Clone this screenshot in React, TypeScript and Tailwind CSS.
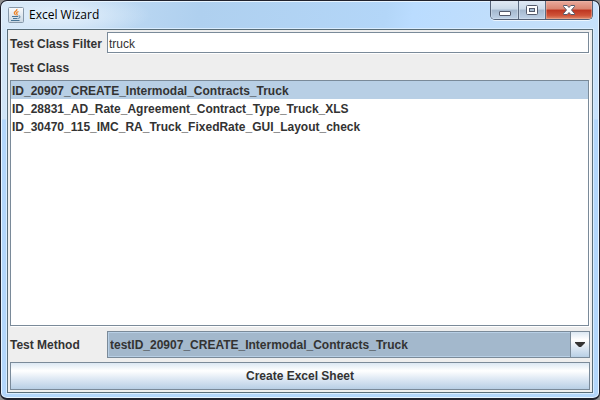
import { useState } from "react";

const classes = [
  "ID_20907_CREATE_Intermodal_Contracts_Truck",
  "ID_28831_AD_Rate_Agreement_Contract_Type_Truck_XLS",
  "ID_30470_115_IMC_RA_Truck_FixedRate_GUI_Layout_check",
];

function JavaIcon() {
  return (
    <svg className="size-4 shrink-0" viewBox="0 0 16 16" aria-hidden="true">
      <defs>
        <linearGradient id="tile" x1="0" y1="0" x2="0" y2="1">
          <stop offset="0" stopColor="#fbfcfd" />
          <stop offset="1" stopColor="#c9d7e3" />
        </linearGradient>
      </defs>
      <rect x=".5" y=".5" width="15" height="15" rx="1" fill="url(#tile)" stroke="#8799aa" />
      <path d="M8.800 2c1 2-3 2.600-2.500 4.200.2.800 1.200 1 1 2M10.500 4.500c-2 .8-2.500 1.700-1.500 2.500.4.5.2 1-.4 1.500" fill="none" stroke="#ec8428" strokeWidth="1.300" />
      <path d="M4 9.500h6M5 11.500h4.500M10.500 9c2.300-.4 2 2-.2 2.400M3 13.500h8.500" fill="none" stroke="#487596" strokeWidth="1" />
    </svg>
  );
}

function TitleBar() {
  const plain =
    "flex items-center justify-center border-r border-[#5c6b80] bg-[linear-gradient(#e1eaf4,#cbdae9_45%,#a4b8ce_50%,#bed1e6)] shadow-[inset_0_0_0_1px_#dbe6f280]";
  return (
    <header className="flex h-7 shrink-0 items-start justify-between">
      <div className="flex items-center gap-[5px] pt-[6px] pl-px">
        <JavaIcon />
        <h1 className="font-['Open_Sans',sans-serif] text-xs leading-4 font-normal text-black">Excel Wizard</h1>
      </div>
      <div className="flex h-[19px] overflow-hidden rounded-b-[5px] border border-t-0 border-[#536176] shadow-[0_1px_0_#ffffffb0]">
        <button type="button" aria-label="Minimize" className={`w-7 ${plain}`}>
          <svg className="mt-1.5 h-[5px] w-3" viewBox="0 0 12 5">
            <rect x=".5" y=".5" width="11" height="4" rx=".5" fill="#fff" stroke="#535a6b" />
          </svg>
        </button>
        <button type="button" aria-label="Maximize" className={`w-[27px] ${plain}`}>
          <svg className="h-2.5 w-3" viewBox="0 0 12 10">
            <rect x=".5" y=".5" width="11" height="9" rx="1" fill="#fff" stroke="#535a6b" />
            <rect x="3.500" y="3.500" width="5" height="3" fill="#a9bed3" stroke="#535a6b" />
          </svg>
        </button>
        <button
          type="button"
          aria-label="Close"
          className="flex w-[46px] items-center justify-center bg-[linear-gradient(#e9aa9d,#d98570_45%,#bd3520_50%,#cf5338_80%,#df8b6c)] shadow-[inset_0_0_0_1px_#f0c0b070]"
        >
          <svg className="h-2.5 w-3" viewBox="0 0 12 10">
            <path d="M.5.5h3.700L6 2.500 7.800.5h3.700v1L8.500 5l3 3.500v1H7.800L6 7.500 4.200 9.500H.5v-1l3-3.500-3-3.500z" fill="#fff" stroke="#535a6b" />
          </svg>
        </button>
      </div>
    </header>
  );
}

export default function App() {
  const [filter, setFilter] = useState("truck");
  const [selected, setSelected] = useState(classes[0]);
  const shown = classes.filter((name) => name.toLowerCase().includes(filter.toLowerCase()));
  const method = `test${selected}`;

  return (
    <div className="flex h-screen flex-col bg-[#8f8f8f] font-['Liberation_Sans',Arial,sans-serif] text-xs font-bold text-[#333]">
      <div className="flex min-h-0 flex-1 flex-col rounded-[7px] border border-b-2 border-[#20222d] bg-[radial-gradient(90px_22px_at_60px_14px,#e4f0fb,#e4f0fb00),linear-gradient(#0000_118px,#b3d6fa_119px),linear-gradient(100deg,#d5e7f7_0%,#bcd8f2_18%,#afd0ef_30%,#b3d6f8_58%,#badcff_62%,#c3dffa_80%,#cbe4fd_100%)] px-1.5 pb-[5px] shadow-[inset_0_0_0_1px_#e7f4ff]">
        <TitleBar />
        <main className="flex min-h-0 flex-1 flex-col border border-[#596d78] bg-[#eee] px-0.5 pt-0.5 pb-0.5 shadow-[0_0_0_1px_#d9ecfe]">
          <div className="flex h-[22px] shrink-0 items-start">
            <label htmlFor="filter" className="w-[97px] shrink-0 leading-6">Test Class Filter</label>
            <input
              id="filter"
              value={filter}
              onChange={(e) => setFilter(e.target.value)}
              className="mr-px h-[21px] min-w-0 flex-1 border border-[#7a8a99] bg-white px-px pt-0.5 font-normal shadow-[1px_1px_0_#fff] outline-none"
            />
          </div>
          <label htmlFor="classes" className="flex h-[26px] shrink-0 items-center pt-0.5">Test Class</label>
          <div className="flex min-h-0 flex-1 pr-px">
            <select
              id="classes"
              size={13}
              value={selected}
              onChange={(e) => setSelected(e.target.value)}
              className="h-full min-w-0 flex-1 overflow-hidden border border-[#7a8a99] bg-white p-0 shadow-[1px_1px_0_#fff] outline-none"
            >
              {shown.map((name) => (
                <option
                  key={name}
                  value={name}
                  className="h-[18px] px-px pt-[3px] pb-0 font-bold [-webkit-text-fill-color:#333] checked:bg-[linear-gradient(#b8cfe5,#b8cfe5)]"
                >
                  {name}
                </option>
              ))}
            </select>
          </div>
          <div className="mt-[5px] flex h-[27px] shrink-0 items-center">
            <label htmlFor="method" className="w-[97px] shrink-0">Test Method</label>
            <div className="relative h-full min-w-0 flex-1">
              <select
                id="method"
                value={method}
                onChange={(e) => setSelected(e.target.value.slice(4))}
                className="size-full appearance-none border border-[#7a8a99] bg-[#a3b8cc] pr-5 pl-0.5 shadow-[inset_0_0_0_1px_#b8cfe5] outline-none"
              >
                {classes.map((name) => (
                  <option key={name} value={`test${name}`}>{`test${name}`}</option>
                ))}
              </select>
              <span className="pointer-events-none absolute inset-y-0 right-0 flex w-5 items-center justify-center border border-[#7a8a99] bg-[linear-gradient(#dce8f3,#fff_30%,#dfe9f4_60%,#b8cfe5)]">
                <svg className="h-[5px] w-2.5" viewBox="0 0 10 5" aria-hidden="true">
                  <path d="M0 0h10v1L6 5H4L0 1z" fill="#333" />
                </svg>
              </span>
            </div>
          </div>
          <button
            type="button"
            className="mt-1 h-7 shrink-0 border border-[#7a8a99] bg-[linear-gradient(#dce8f3,#fff_30%,#dfe9f4_60%,#b8cfe5)]"
          >
            Create Excel Sheet
          </button>
        </main>
      </div>
    </div>
  );
}
